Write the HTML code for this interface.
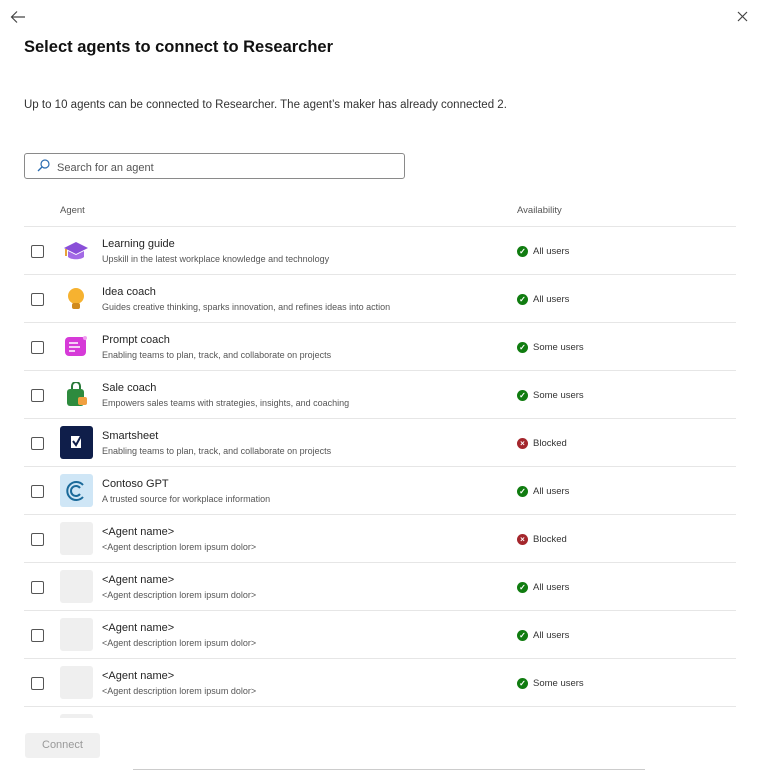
<!DOCTYPE html>
<html><head><style>
*{margin:0;padding:0;box-sizing:border-box}
body{width:759px;height:771px;background:#fff;font-family:"Liberation Sans",sans-serif;color:#242424;position:relative;overflow:hidden}
.abs{position:absolute}
h1{position:absolute;left:24px;top:38px;font-size:16.5px;font-weight:bold;color:#111}
.sub{left:24px;top:99px;font-size:11.5px;color:#333}
.search{left:24px;top:153px;width:381px;height:26px;border:1px solid #8a8a8a;border-radius:3px;font-size:11px;color:#555;padding:8px 0 0 32px}
.hdr{top:205px;font-size:9.5px;color:#555}
.line{left:24px;width:712px;height:1px;background:#e6e6e6}
.cb{left:31px;width:13px;height:13px;border:1px solid #555;border-radius:2px}
.ic{left:60px;width:33px;height:33px;border-radius:3px}
.nm{left:102px;font-size:11px;color:#242424}
.ds{left:102px;font-size:9px;color:#555}
.av{left:517px;font-size:9.5px;color:#333;display:flex;align-items:center;height:12px}
.dot{display:inline-block;width:11px;height:11px;border-radius:50%;margin-right:5px;color:#fff;font-size:8px;text-align:center;line-height:11px;font-weight:bold}
.g{background:#107c10}.r{background:#a4262c}
</style></head><body>
<svg class="abs" style="left:10px;top:10px" width="16" height="14" viewBox="0 0 16 14"><path d="M15 7H2M7 1.5L1.5 7 7 12.5" stroke="#444" stroke-width="1.2" fill="none"/></svg>
<svg class="abs" style="left:737px;top:11px" width="11" height="11" viewBox="0 0 11 11"><path d="M1 1L10 10M10 1L1 10" stroke="#444" stroke-width="1.2"/></svg>
<h1>Select agents to connect to Researcher</h1>
<div class="abs sub">Up to 10 agents can be connected to Researcher. The agent’s maker has already connected 2.</div>
<div class="abs search">Search for an agent</div>
<svg class="abs" style="left:37px;top:159px" width="13" height="13" viewBox="0 0 13 13"><circle cx="8" cy="5" r="4" stroke="#2b6cb0" stroke-width="1.2" fill="none"/><path d="M5 8L1 12" stroke="#2b6cb0" stroke-width="1.3"/></svg>
<div class="abs hdr" style="left:60px">Agent</div>
<div class="abs hdr" style="left:517px">Availability</div>

<div class="abs line" style="top:226px"></div>
<div class="abs cb" style="top:245px"></div>
<svg class="abs" style="left:63px;top:240px" width="26" height="22" viewBox="0 0 26 22"><path d="M13 2L25 8 13 14 1 8Z" fill="#8a4fd8"/><path d="M5 11v6c3 3 13 3 16 0v-6l-8 4z" fill="#a36ae6"/><path d="M3 9v7" stroke="#e8a33a" stroke-width="2"/></svg>
<div class="abs nm" style="top:238px">Learning guide</div><div class="abs ds" style="top:254px">Upskill in the latest workplace knowledge and technology</div>
<div class="abs av" style="top:245px"><span class="dot g">✓</span>All users</div>
<div class="abs line" style="top:274px"></div>

<div class="abs cb" style="top:293px"></div>
<svg class="abs" style="left:66px;top:286px" width="20" height="26" viewBox="0 0 20 26"><circle cx="10" cy="10" r="8" fill="#f6b230"/><rect x="6" y="17" width="8" height="6" rx="2" fill="#d08a1c"/></svg>
<div class="abs nm" style="top:286px">Idea coach</div><div class="abs ds" style="top:302px">Guides creative thinking, sparks innovation, and refines ideas into action</div>
<div class="abs av" style="top:293px"><span class="dot g">✓</span>All users</div>
<div class="abs line" style="top:322px"></div>

<div class="abs cb" style="top:341px"></div>
<svg class="abs" style="left:64px;top:334px" width="24" height="24" viewBox="0 0 24 24"><rect x="1" y="3" width="21" height="19" rx="4" fill="#d63ad8"/><path d="M5 9h9M5 13h11M5 17h6" stroke="#fff" stroke-width="1.5"/><circle cx="21" cy="4" r="2" fill="#f0a0f0"/></svg>
<div class="abs nm" style="top:334px">Prompt coach</div><div class="abs ds" style="top:350px">Enabling teams to plan, track, and collaborate on projects</div>
<div class="abs av" style="top:341px"><span class="dot g">✓</span>Some users</div>
<div class="abs line" style="top:370px"></div>

<div class="abs cb" style="top:389px"></div>
<svg class="abs" style="left:65px;top:382px" width="24" height="26" viewBox="0 0 24 26"><path d="M7 7V4a4 4 0 0 1 8 0v3" stroke="#2a7a3a" stroke-width="2" fill="none"/><rect x="2" y="7" width="17" height="17" rx="3" fill="#2e8b3e"/><rect x="13" y="15" width="9" height="8" rx="2" fill="#f0a040"/></svg>
<div class="abs nm" style="top:382px">Sale coach</div><div class="abs ds" style="top:398px">Empowers sales teams with strategies, insights, and coaching</div>
<div class="abs av" style="top:389px"><span class="dot g">✓</span>Some users</div>
<div class="abs line" style="top:418px"></div>

<div class="abs cb" style="top:437px"></div>
<div class="abs ic" style="top:426px;background:#0f1e4a"></div>
<svg class="abs" style="left:70px;top:435px" width="13" height="14" viewBox="0 0 13 14"><rect x="1" y="1" width="10" height="12" fill="#fff"/><path d="M3 6l3 4 5-9" stroke="#0f1e4a" stroke-width="2" fill="none"/></svg>
<div class="abs nm" style="top:430px">Smartsheet</div><div class="abs ds" style="top:446px">Enabling teams to plan, track, and collaborate on projects</div>
<div class="abs av" style="top:437px"><span class="dot r">×</span>Blocked</div>
<div class="abs line" style="top:466px"></div>

<div class="abs cb" style="top:485px"></div>
<div class="abs ic" style="top:474px;background:#cfe6f6"></div>
<svg class="abs" style="left:64px;top:479px" width="24" height="24" viewBox="0 0 24 24"><path d="M19 6A9 9 0 1 0 19 18M16 9A5 5 0 1 0 16 15" stroke="#1b6a9a" stroke-width="2" fill="none"/></svg>
<div class="abs nm" style="top:478px">Contoso GPT</div><div class="abs ds" style="top:494px">A trusted source for workplace information</div>
<div class="abs av" style="top:485px"><span class="dot g">✓</span>All users</div>
<div class="abs line" style="top:514px"></div>

<div class="abs cb" style="top:533px"></div>
<div class="abs ic" style="top:522px;background:#efefef"></div>
<div class="abs nm" style="top:526px">&lt;Agent name&gt;</div><div class="abs ds" style="top:542px">&lt;Agent description lorem ipsum dolor&gt;</div>
<div class="abs av" style="top:533px"><span class="dot r">×</span>Blocked</div>
<div class="abs line" style="top:562px"></div>

<div class="abs cb" style="top:581px"></div>
<div class="abs ic" style="top:570px;background:#efefef"></div>
<div class="abs nm" style="top:574px">&lt;Agent name&gt;</div><div class="abs ds" style="top:590px">&lt;Agent description lorem ipsum dolor&gt;</div>
<div class="abs av" style="top:581px"><span class="dot g">✓</span>All users</div>
<div class="abs line" style="top:610px"></div>

<div class="abs cb" style="top:629px"></div>
<div class="abs ic" style="top:618px;background:#efefef"></div>
<div class="abs nm" style="top:622px">&lt;Agent name&gt;</div><div class="abs ds" style="top:638px">&lt;Agent description lorem ipsum dolor&gt;</div>
<div class="abs av" style="top:629px"><span class="dot g">✓</span>All users</div>
<div class="abs line" style="top:658px"></div>

<div class="abs cb" style="top:677px"></div>
<div class="abs ic" style="top:666px;background:#efefef"></div>
<div class="abs nm" style="top:670px">&lt;Agent name&gt;</div><div class="abs ds" style="top:686px">&lt;Agent description lorem ipsum dolor&gt;</div>
<div class="abs av" style="top:677px"><span class="dot g">✓</span>Some users</div>
<div class="abs line" style="top:706px"></div>
<div class="abs" style="left:60px;top:714px;width:33px;height:4px;background:#efefef;border-radius:3px 3px 0 0"></div>

<div class="abs" style="left:25px;top:733px;width:75px;height:25px;background:#f0f0f0;border-radius:3px;font-size:11px;color:#999;text-align:center;line-height:25px">Connect</div>
<div class="abs" style="left:133px;top:769px;width:512px;height:1px;background:#ccc"></div>
</body></html>
